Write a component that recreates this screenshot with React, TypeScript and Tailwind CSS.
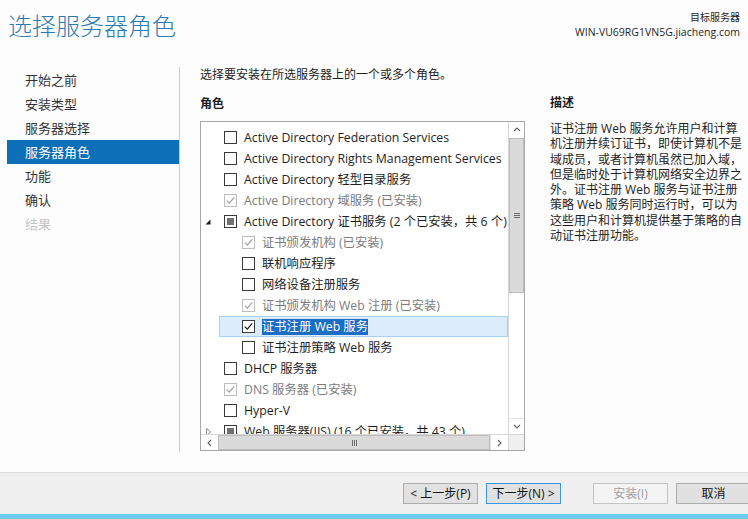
import clsx from 'clsx';

const FONT = "font-['Open_Sans','Noto_Sans_CJK_SC',sans-serif]";

type TState = 'off' | 'on' | 'installed' | 'partial';

type TRow = {
   level: 0 | 1;
   text: string;
   state: TState;
   expander?: 'open' | 'closed';
   selected?: boolean;
};

const navItems = [
   { label: '开始之前' },
   { label: '安装类型' },
   { label: '服务器选择' },
   { label: '服务器角色', active: true },
   { label: '功能' },
   { label: '确认' },
   { label: '结果', disabled: true },
];

const rows: TRow[] = [
   { level: 0, text: 'Active Directory Federation Services', state: 'off' },
   { level: 0, text: 'Active Directory Rights Management Services', state: 'off' },
   { level: 0, text: 'Active Directory 轻型目录服务', state: 'off' },
   { level: 0, text: 'Active Directory 域服务 (已安装)', state: 'installed' },
   { level: 0, text: 'Active Directory 证书服务 (2 个已安装，共 6 个)', state: 'partial', expander: 'open' },
   { level: 1, text: '证书颁发机构 (已安装)', state: 'installed' },
   { level: 1, text: '联机响应程序', state: 'off' },
   { level: 1, text: '网络设备注册服务', state: 'off' },
   { level: 1, text: '证书颁发机构 Web 注册 (已安装)', state: 'installed' },
   { level: 1, text: '证书注册 Web 服务', state: 'on', selected: true },
   { level: 1, text: '证书注册策略 Web 服务', state: 'off' },
   { level: 0, text: 'DHCP 服务器', state: 'off' },
   { level: 0, text: 'DNS 服务器 (已安装)', state: 'installed' },
   { level: 0, text: 'Hyper-V', state: 'off' },
   { level: 0, text: 'Web 服务器(IIS) (16 个已安装，共 43 个)', state: 'partial', expander: 'closed' },
];

const description = [
   '证书注册 Web 服务允许用户和计算',
   '机注册并续订证书，即使计算机不是',
   '域成员，或者计算机虽然已加入域，',
   '但是临时处于计算机网络安全边界之',
   '外。证书注册 Web 服务与证书注册',
   '策略 Web 服务同时运行时，可以为',
   '这些用户和计算机提供基于策略的自',
   '动证书注册功能。',
];

function CheckBox({ state }: { state: TState }) {
   const dim = state === 'installed';
   return (
      <span
         className={clsx(
            'flex h-[13px] w-[13px] shrink-0 items-center justify-center border bg-white',
            dim ? 'border-[#bdbdbd]' : 'border-[#3a3a3a]',
         )}
      >
         {state === 'partial' && <span className="h-[7px] w-[7px] bg-[#707070]" />}
         {(state === 'on' || state === 'installed') && (
            <svg viewBox="0 0 11 11" className="h-[11px] w-[11px]">
               <path d="M1.8 5.6 L4.3 8.1 L9.2 2.4" fill="none" stroke={dim ? '#a3a3a3' : '#1e1e1e'} strokeWidth="1.3" />
            </svg>
         )}
      </span>
   );
}

function Expander({ kind }: { kind?: 'open' | 'closed' }) {
   if (!kind) return null;
   return kind === 'open' ? (
      <svg viewBox="0 0 6 6" className="ml-[3px] h-[6px] w-[6px]">
         <polygon points="5.5,0.5 5.5,5.5 0.5,5.5" fill="#1e1e1e" />
      </svg>
   ) : (
      <svg viewBox="0 0 6 8" className="ml-[4px] h-[8px] w-[6px]">
         <polygon points="0.5,0.5 4.5,4 0.5,7.5" fill="none" stroke="#8a8a8a" />
      </svg>
   );
}

function Chevron({ dir }: { dir: 'up' | 'down' | 'left' | 'right' }) {
   const d = {
      up: 'M1 5 L4 2 L7 5',
      down: 'M1 2 L4 5 L7 2',
      left: 'M5 1 L2 4 L5 7',
      right: 'M2 1 L5 4 L2 7',
   }[dir];
   return (
      <svg viewBox="0 0 8 8" className="h-[8px] w-[8px]">
         <path d={d} fill="none" stroke="#606060" strokeWidth="1.1" />
      </svg>
   );
}

function TreeRow({ row }: { row: TRow }) {
   const dim = row.state === 'installed';
   return (
      <div
         className={clsx(
            'flex h-[21px] shrink-0 items-center whitespace-nowrap border',
            row.level === 1 && 'ml-[18px]',
            row.selected ? 'border-[#a9cff2] bg-[#dcecfc]' : 'border-transparent',
         )}
      >
         <span className="flex w-[22px] shrink-0 items-center">
            <Expander kind={row.expander} />
         </span>
         <CheckBox state={row.state} />
         <span
            className={clsx(
               'ml-[7px] leading-[16px]',
               row.selected ? 'bg-[#1c6ec4] text-white' : dim ? 'text-[#7c7c7c]' : 'text-[#1e1e1e]',
            )}
         >
            {row.text}
         </span>
      </div>
   );
}

function Button({ children, variant }: { children: React.ReactNode; variant?: 'focus' | 'disabled' }) {
   return (
      <div
         className={clsx(
            'flex h-[21px] w-[75px] shrink-0 items-center justify-center border text-[12px]',
            variant === 'focus' && 'border-[#3d97e0] bg-[#e1e1e1] text-[#111]',
            variant === 'disabled' && 'border-[#c4c4c4] bg-[#f4f4f4] text-[#a0a0a0]',
            !variant && 'border-[#adadad] bg-[#e1e1e1] text-[#111]',
         )}
      >
         {children}
      </div>
   );
}

export default function App() {
   return (
      <div className={clsx('flex h-[519px] w-[748px] flex-col overflow-hidden bg-[#fdfdfd] text-[12px] text-[#1e1e1e]', FONT)}>
         {/* header */}
         <div className="flex h-[60px] shrink-0 justify-between">
            <div className="pl-[8px] pt-[10px] text-[24px] font-light leading-[32px] text-[#2a7bb3]">选择服务器角色</div>
            <div className="pr-[8px] pt-[10px] text-right">
               <div className="text-[10px] leading-[14px]">目标服务器</div>
               <div className="text-[10.5px] leading-[16px]">WIN-VU69RG1VN5G.jiacheng.com</div>
            </div>
         </div>

         {/* body */}
         <div className="flex h-[412px] shrink-0">
            <div className="mt-[7px] h-[385px] w-[180px] shrink-0 border-r border-[#cbcbcb] pt-[1px]">
               {navItems.map((item) => (
                  <div
                     key={item.label}
                     className={clsx(
                        'ml-[7px] h-[24px] pl-[18px] text-[13px] leading-[24px]',
                        item.active && 'bg-[#0d6fb8] text-white',
                        item.disabled && 'text-[#c6c6c6]',
                        !item.active && !item.disabled && 'text-[#333]',
                     )}
                  >
                     {item.label}
                  </div>
               ))}
            </div>

            <div className="flex w-[345px] shrink-0 flex-col pl-[20px] pt-[7px]">
               <div className="leading-[16px]">选择要安装在所选服务器上的一个或多个角色。</div>
               <div className="mt-[13px] font-bold leading-[16px]">角色</div>
               <div className="mt-[9px] flex h-[330px] w-[325px] flex-col border border-[#a8a8a8] bg-white">
                  <div className="flex h-[312px] shrink-0">
                     <div className="flex min-w-0 flex-1 flex-col overflow-hidden pt-[5px] text-[12.3px]">
                        {rows.map((row) => (
                           <TreeRow key={row.text} row={row} />
                        ))}
                     </div>
                     <div className="flex w-[16px] shrink-0 flex-col border-l border-[#d6d6d6]">
                        <div className="flex h-[16px] items-center justify-center">
                           <Chevron dir="up" />
                        </div>
                        <div className="flex h-[155px] items-center justify-center border border-[#bdbdbd] bg-[#dadada]">
                           <div className="flex flex-col gap-[1px]">
                              <span className="h-px w-[6px] bg-[#6a6a6a]" />
                              <span className="h-px w-[6px] bg-[#6a6a6a]" />
                              <span className="h-px w-[6px] bg-[#6a6a6a]" />
                           </div>
                        </div>
                        <div className="flex-1" />
                        <div className="flex h-[16px] items-center justify-center border-t border-[#e2e2e2]">
                           <Chevron dir="down" />
                        </div>
                     </div>
                  </div>
                  <div className="flex h-[16px] shrink-0 border-t border-[#d6d6d6]">
                     <div className="flex w-[17px] items-center justify-center">
                        <Chevron dir="left" />
                     </div>
                     <div className="flex w-[272px] items-center justify-center border border-[#bdbdbd] bg-[#dadada]">
                        <div className="flex gap-[1px]">
                           <span className="h-[6px] w-px bg-[#6a6a6a]" />
                           <span className="h-[6px] w-px bg-[#6a6a6a]" />
                           <span className="h-[6px] w-px bg-[#6a6a6a]" />
                        </div>
                     </div>
                     <div className="flex flex-1 items-center justify-center border-l border-[#e2e2e2]">
                        <Chevron dir="right" />
                     </div>
                     <div className="w-[16px] border-l border-[#d6d6d6] bg-[#f0f0f0]" />
                  </div>
               </div>
            </div>

            <div className="ml-[25px] w-[198px] shrink-0 pt-[35px]">
               <div className="font-bold leading-[16px]">描述</div>
               <div className="mt-[10px] leading-[15.3px]">
                  {description.map((line) => (
                     <div key={line} className="whitespace-nowrap">
                        {line}
                     </div>
                  ))}
               </div>
            </div>
         </div>

         {/* footer */}
         <div className="flex h-[42px] shrink-0 border-t border-[#dcdcdc] bg-[#f0f0f0] pl-[403px] pt-[10px]">
            <Button>&lt; 上一步(P)</Button>
            <div className="ml-[8px]">
               <Button variant="focus">下一步(N) &gt;</Button>
            </div>
            <div className="ml-[32px]">
               <Button variant="disabled">安装(I)</Button>
            </div>
            <div className="ml-[8px]">
               <Button>取消</Button>
            </div>
         </div>
         <div className="h-[5px] shrink-0 bg-[#6ccbec]" />
      </div>
   );
}
